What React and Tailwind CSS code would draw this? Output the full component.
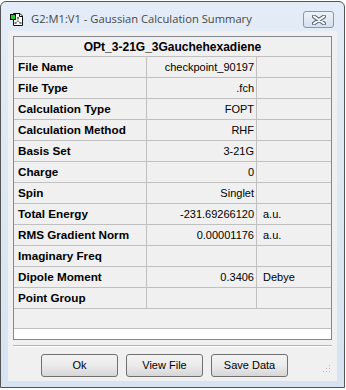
import React from 'react';

const rows = [
    ['File Name', 'checkpoint_90197', ''],
    ['File Type', '.fch', ''],
    ['Calculation Type', 'FOPT', ''],
    ['Calculation Method', 'RHF', ''],
    ['Basis Set', '3-21G', ''],
    ['Charge', '0', ''],
    ['Spin', 'Singlet', ''],
    ['Total Energy', '-231.69266120', 'a.u.'],
    ['RMS Gradient Norm', '0.00001176', 'a.u.'],
    ['Imaginary Freq', '', ''],
    ['Dipole Moment', '0.3406', 'Debye'],
    ['Point Group', '', ''],
];

const font = { fontFamily: '"Liberation Sans", Arial, sans-serif' };

const DocIcon = () => (
    <svg width="14" height="15" viewBox="0 0 14 15">
        <path d="M3.5 1.5 H10 L12.5 4 V13.5 H3.5 Z" fill="#fff" stroke="#111" />
        <path d="M9.5 1.5 V4.5 H12.5" fill="none" stroke="#111" />
        <g stroke="#888" strokeWidth="1" fill="none">
            <path d="M8 6 L8 9 L5.5 11 M8 9 L10.5 11" />
        </g>
        <rect x="7" y="5" width="2" height="2" fill="#777" />
        <rect x="4.5" y="10" width="2" height="2" fill="#777" />
        <rect x="9.5" y="10" width="2" height="2" fill="#777" />
        <rect x="0.5" y="2.5" width="5" height="5" fill="#1bd11b" stroke="#111" />
    </svg>
);

const CloseGlyph = () => (
    <svg width="14" height="10" viewBox="0 0 14 10">
        <path d="M2 1.5 L12 8.5 M12 1.5 L2 8.5" stroke="#5d6a7d" strokeWidth="4" strokeLinecap="round" />
        <path d="M2 1.5 L12 8.5 M12 1.5 L2 8.5" stroke="#fff" strokeWidth="2" strokeLinecap="round" />
    </svg>
);

const WinButton = ({ children }) => (
    <button className="w-[77px] h-[23px] border border-[#707070] rounded-[3px] bg-gradient-to-b from-[#f3f3f3] via-[#ebebeb] to-[#d6d6d6] text-[11px] text-black leading-none">
        {children}
    </button>
);

const App = () => {
    return (
        <div className="w-[346px] h-[390px] bg-white overflow-hidden" style={font}>
            <div className="mt-[1px] w-[345px] h-[387px] border border-[#555] rounded-t-[6px] bg-gradient-to-b from-[#e3ecf7] to-[#d6e3f2] flex flex-col px-[7px] pb-[6px]">
                {/* Title bar */}
                <div className="h-[29px] shrink-0 flex items-center pt-[6px]">
                    <div className="ml-[2px] w-[14px] h-[15px]">
                        <DocIcon />
                    </div>
                    <span className="ml-[7px] text-[#474747]" style={{ fontFamily: '"Open Sans", "Liberation Sans", sans-serif', fontSize: '11.2px' }}>
                        G2:M1:V1 - Gaussian Calculation Summary
                    </span>
                    <div className="ml-auto mr-[3px] w-[31px] h-[17px] border border-[#8a97aa] rounded-[3px] bg-gradient-to-b from-[#eef3f9] to-[#d5e0ee] flex items-center justify-center">
                        <CloseGlyph />
                    </div>
                </div>

                {/* Client area */}
                <div className="flex-1 bg-[#f0f0f0] px-[5px] pt-[5px] flex flex-col">
                    <div className="w-[319px] h-[304px] border border-[#828790] bg-[#f0f0f0] flex flex-col">
                        <div className="h-[20px] shrink-0 border-b border-[#c0c0c0] flex items-center justify-center text-[12px] font-bold text-black">
                            OPt_3-21G_3Gauchehexadiene
                        </div>
                        {rows.map(([label, value, unit], i) => (
                            <div key={i} className="h-[21px] shrink-0 border-b border-[#c0c0c0] grid grid-cols-[133px_110px_74px]">
                                <div className="border-r border-[#c0c0c0] pl-[4px] flex items-center text-[11.7px] font-bold text-black whitespace-nowrap">
                                    {label}
                                </div>
                                <div className="border-r border-[#c0c0c0] pr-[2px] flex items-center justify-end text-[11px] text-black whitespace-nowrap">
                                    {value}
                                </div>
                                <div className="pl-[6px] flex items-center text-[11px] text-black">
                                    {unit}
                                </div>
                            </div>
                        ))}
                        <div className="h-[20px] shrink-0 border-b border-[#c0c0c0]"></div>
                        <div className="flex-1 bg-white"></div>
                    </div>

                    <div className="mt-[5px] w-[319px] h-[2px] border-t border-[#b4b4b4] border-b border-b-white"></div>

                    <div className="mt-[7px] flex items-start">
                        <div className="ml-[28px] flex gap-[8px]">
                            <WinButton>Ok</WinButton>
                            <WinButton>View File</WinButton>
                            <WinButton>Save Data</WinButton>
                        </div>
                        <svg className="ml-[34px] mt-[10px]" width="10" height="10" viewBox="0 0 10 10">
                            <rect x="7" y="1" width="1" height="1" fill="#b8b8b8" />
                            <rect x="4" y="4" width="1" height="1" fill="#b8b8b8" />
                            <rect x="7" y="4" width="1" height="1" fill="#b8b8b8" />
                            <rect x="1" y="7" width="1" height="1" fill="#b8b8b8" />
                            <rect x="4" y="7" width="1" height="1" fill="#b8b8b8" />
                            <rect x="7" y="7" width="1" height="1" fill="#b8b8b8" />
                        </svg>
                    </div>
                </div>
            </div>
        </div>
    );
};

export default App;
